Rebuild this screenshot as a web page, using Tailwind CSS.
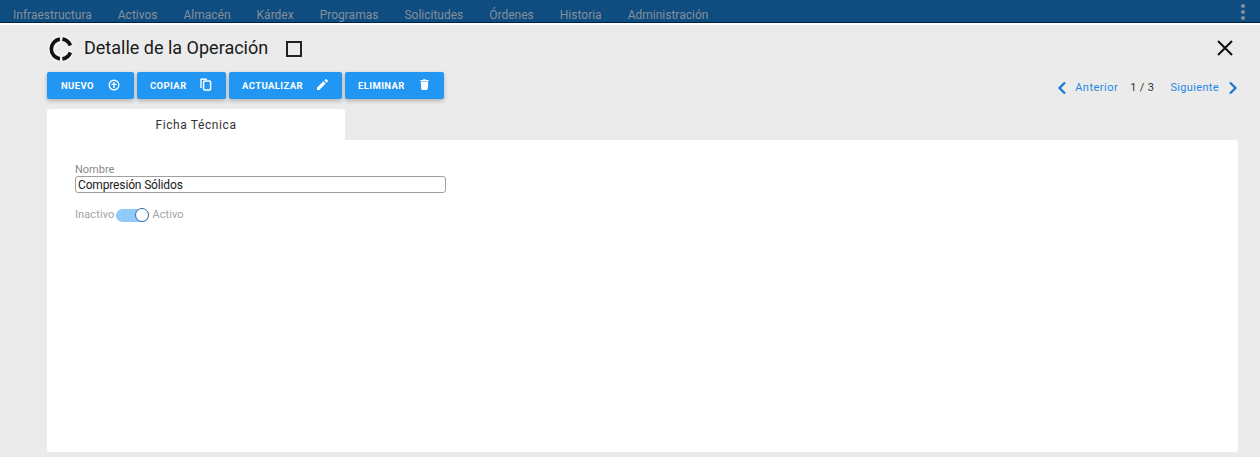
<!DOCTYPE html>
<html lang="es">
<head>
    <meta charset="UTF-8">
    <title>Detalle de la Operación</title>
    <script src="https://cdn.jsdelivr.net/npm/@tailwindcss/browser@4"></script>
</head>
<body class="bg-[#ebebeb] h-[457px] overflow-hidden font-['Roboto',sans-serif]">
    <!-- barra superior -->
    <nav class="h-[25px] bg-[#0f4c7f] border-b-2 border-b-white shadow-[inset_0_-1px_0_#02213f] flex items-center pl-[13px] pr-[15px] text-[12px] text-[#84909b] pt-[10px] pb-[3px] box-border">
        <div class="flex gap-[26px] leading-none">
            <span>Infraestructura</span>
            <span>Activos</span>
            <span>Almacén</span>
            <span>Kárdex</span>
            <span>Programas</span>
            <span>Solicitudes</span>
            <span>Órdenes</span>
            <span>Historia</span>
            <span>Administración</span>
        </div>
        <div class="ml-auto flex flex-col gap-[2px] -mt-[6px]">
            <span class="w-[4px] h-[4px] rounded-full bg-[#84909b]"></span>
            <span class="w-[4px] h-[4px] rounded-full bg-[#84909b]"></span>
            <span class="w-[4px] h-[4px] rounded-full bg-[#84909b]"></span>
        </div>
    </nav>

    <div class="pl-[47px] pr-[22px]">
        <!-- titulo -->
        <div class="h-[47px] flex items-center">
            <svg class="ml-[2px] drop-shadow-[0_0_2px_white]" width="24" height="24" viewBox="0 0 24 24" fill="none" stroke="#111" stroke-width="3.6">
                <path d="M10.9 21.900A10 10 0 0 1 10.900 2.100"/>
                <path d="M13.400 2.100A10 10 0 0 1 21.370 8.500"/>
                <path d="M21.370 15.500A10 10 0 0 1 13.400 21.900"/>
            </svg>
            <h1 class="ml-[11px] mb-[2px] text-[18px] leading-none text-[#1a1a1a]">Detalle de la Operación</h1>
            <span class="ml-[18px] w-[16px] h-[16px] border-2 border-[#222]"></span>
            <svg class="ml-auto mr-[5px] mb-[2px]" width="16" height="16" viewBox="0 0 16 16" fill="none" stroke="#111" stroke-width="2">
                <path d="M1 1l14 14M15 1L1 15"/>
            </svg>
        </div>

        <!-- acciones -->
        <div class="flex items-center h-[27px] text-white text-[9.5px] font-bold tracking-[0.4px]">
            <div class="flex gap-[3px]">
                <button class="w-[87px] h-[27px] pl-[14px] pr-[14px] bg-[#2196f3] rounded-[2px] shadow-[0_2px_4px_rgba(0,0,0,0.25)] flex items-center justify-between">
                    <span class="mt-[2px]">NUEVO</span>
                    <svg class="mb-[2px]" width="12" height="12" viewBox="0 0 12 12" fill="none" stroke="white" stroke-width="1.4"><circle cx="6" cy="6" r="4.800"/><path d="M6 3v6M3.400 5.400h5.200"/></svg>
                </button>
                <button class="w-[89px] h-[27px] pl-[13px] pr-[14px] bg-[#2196f3] rounded-[2px] shadow-[0_2px_4px_rgba(0,0,0,0.25)] flex items-center justify-between">
                    <span class="mt-[2px]">COPIAR</span>
                    <svg class="mb-[2px]" width="12" height="13" viewBox="0 0 12 13" fill="none" stroke="white"><path d="M1 10V1.200h6" stroke-width="1.4"/><rect x="3.600" y="3" width="7" height="9" rx="1" stroke-width="1.5"/></svg>
                </button>
                <button class="w-[113px] h-[27px] pl-[13px] pr-[14px] bg-[#2196f3] rounded-[2px] shadow-[0_2px_4px_rgba(0,0,0,0.25)] flex items-center justify-between">
                    <span class="mt-[2px]">ACTUALIZAR</span>
                    <svg class="mb-[2px]" width="11" height="11" viewBox="0 0 11 11" fill="white"><path d="M0 8.700V11h2.300l6.400-6.400-2.300-2.300zM10.800 2.500c.3-.3.3-.7 0-.9L9.400.2c-.3-.3-.7-.3-.9 0L7.300 1.400l2.300 2.300z"/></svg>
                </button>
                <button class="w-[99px] h-[27px] pl-[13px] pr-[15px] bg-[#2196f3] rounded-[2px] shadow-[0_2px_4px_rgba(0,0,0,0.25)] flex items-center justify-between">
                    <span class="mt-[2px]">ELIMINAR</span>
                    <svg class="mb-[2px]" width="9" height="11" viewBox="0 0 9 11" fill="white"><path d="M.8 2.600h7.400l-.4 7c0 .8-.6 1.400-1.400 1.400H2.600c-.8 0-1.400-.6-1.400-1.400zM.3 1h2.500l.6-.8h2.200l.6.8h2.500v1H.3z"/></svg>
                </button>
            </div>
            <!-- paginacion -->
            <div class="ml-auto mt-[5px] flex items-center text-[11px] font-normal tracking-[0.35px] text-[#1e88e5]">
                <svg width="10" height="14" viewBox="0 0 10 14" fill="none" stroke="#1976d2" stroke-width="2.200"><path d="M8 1.500L2.500 7 8 12.500"/></svg>
                <span class="ml-[8px] tracking-[0.5px]">Anterior</span>
                <span class="ml-[12px] text-[#333]">1 / 3</span>
                <span class="ml-[16px]">Siguiente</span>
                <svg class="ml-[9px]" width="10" height="14" viewBox="0 0 10 14" fill="none" stroke="#1976d2" stroke-width="2.200"><path d="M2 1.500L7.500 7 2 12.500"/></svg>
            </div>
        </div>

        <!-- pestaña -->
        <div class="mt-[10px] w-[298px] h-[31px] bg-white rounded-t-[3px] flex items-center justify-center text-[12px] tracking-[0.6px] text-[#333]">Ficha Técnica</div>

        <!-- panel -->
        <div class="bg-white h-[312px] rounded-b-[3px] rounded-tr-[3px] pl-[28px] pt-[24px]">
            <label class="block text-[11px] leading-[12px] text-[#8a8a8a]">Nombre</label>
            <input class="block w-[371px] h-[17px] px-[2px] border border-[#a0a0a0] rounded-[3px] text-[12px] tracking-[-0.15px] text-[#1a1a1a] font-['Roboto',sans-serif]" value="Compresión Sólidos">
            <div class="mt-[14px] flex items-center text-[11px] tracking-[0.1px] text-[#a3a3a3]">
                <span>Inactivo</span>
                <span class="relative ml-[2px] w-[33px] h-[13px] rounded-full bg-[#90caf9]">
                    <span class="absolute right-0 -top-[0.5px] w-[14px] h-[14px] rounded-full bg-white border-[1.5px] border-[#2a6ea8]"></span>
                </span>
                <span class="ml-[3px]">Activo</span>
            </div>
        </div>
    </div>
</body>
</html>
